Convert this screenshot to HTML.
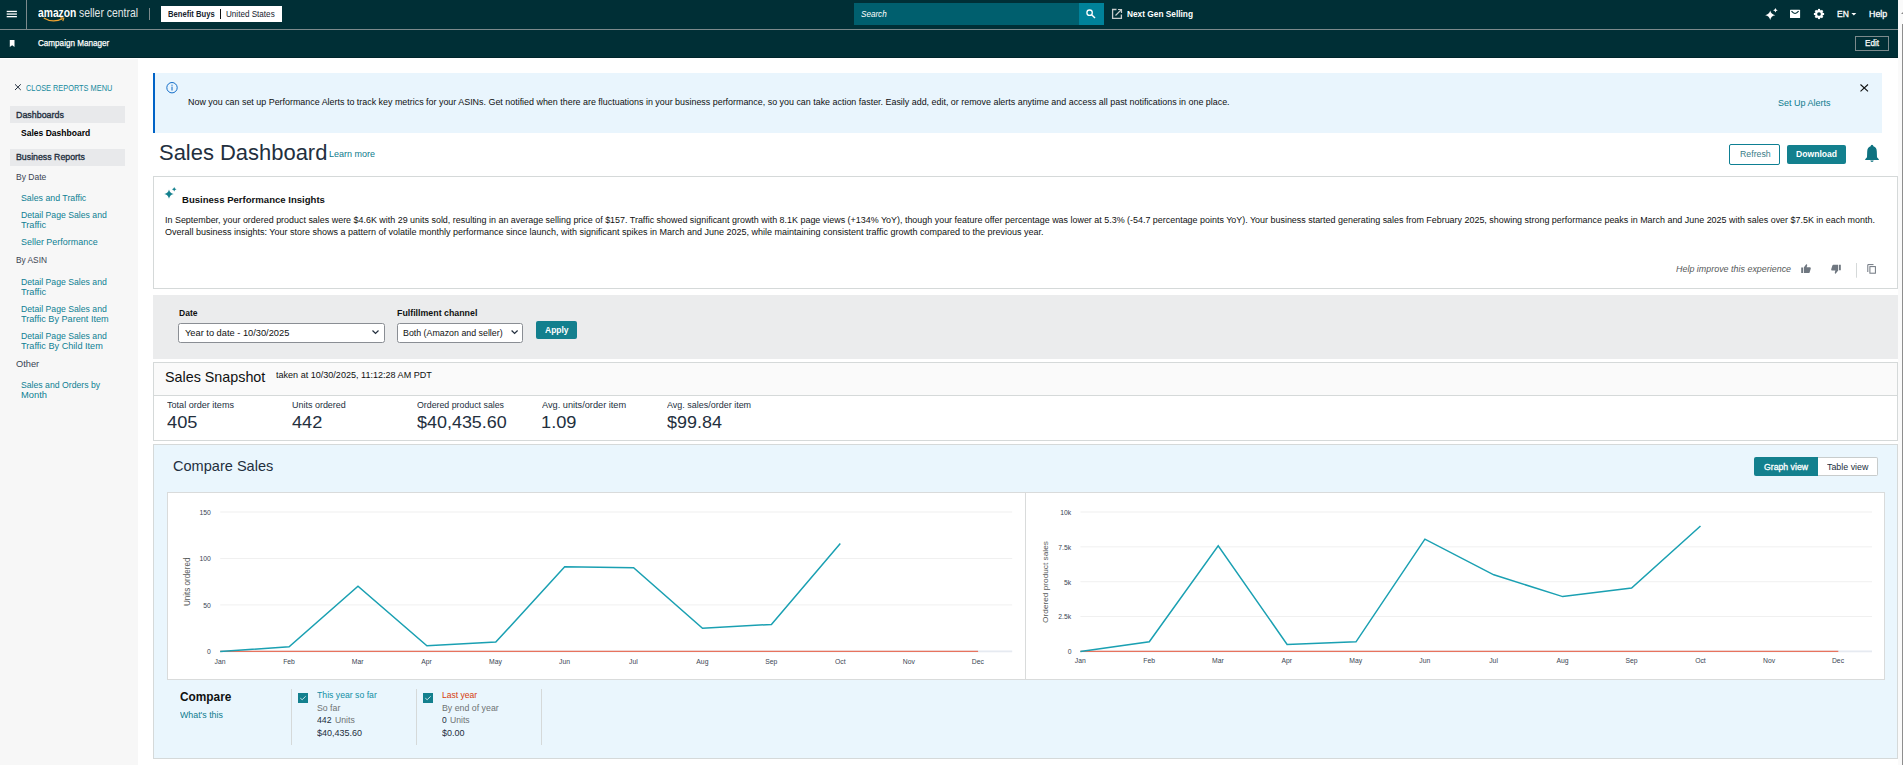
<!DOCTYPE html>
<html><head><meta charset="utf-8">
<style>
*{box-sizing:border-box;margin:0;padding:0}
html,body{width:1903px;height:765px;overflow:hidden;background:#fff;font-family:"Liberation Sans",sans-serif;color:#0f1111}
.t{position:absolute;white-space:nowrap;line-height:1;transform-origin:0 0}
.r{position:absolute}
svg{position:absolute;overflow:visible}
</style></head><body>
<div class="r" style="left:0px;top:0px;width:1898px;height:29px;background:#002f36;"></div>
<div class="r" style="left:0px;top:29px;width:1898px;height:1px;background:#7c8a8c;"></div>
<div class="r" style="left:0px;top:30px;width:1898px;height:28px;background:#002f36;"></div>
<div class="r" style="left:0px;top:57px;width:1898px;height:1px;background:#00252b;"></div>
<div class="r" style="left:1898px;top:0px;width:5px;height:765px;background:#fafafa;"></div>
<div class="r" style="left:1901.8px;top:24px;width:1.2000000000000455px;height:741px;background:#8e8e8e;"></div>
<svg style="left:0;top:0" width="1903" height="20" viewBox="0 0 1903 20"><path d="M1901 14 L1903 12 V14Z" fill="#888"></path></svg>
<div class="r" style="left:26px;top:0px;width:1px;height:29px;background:#7c8a8c;"></div>
<div class="t" style="--x: 37.9; --b: 16.9; --w: 38.4; font-size: 13px; color: rgb(255, 255, 255); font-weight: bold; font-style: normal; left: 37.9px; top: 5.9px; transform: scaleX(0.7924);">amazon</div>
<div class="t" style="--x: 79.2; --b: 16.9; --w: 58.3; font-size: 12.8px; color: rgb(227, 232, 232); font-weight: normal; font-style: normal; left: 79.2px; top: 6.9px; transform: scaleX(0.8131);">seller central</div>
<div class="r" style="left:149px;top:8px;width:1px;height:12px;background:#7c8a8c;"></div>
<div class="r" style="left:161px;top:6px;width:121px;height:16px;background:#fff;"></div>
<div class="t" style="--x: 167.8; --b: 17; --w: 46.8; font-size: 8.7px; color: rgb(22, 34, 46); font-weight: bold; font-style: normal; left: 167.8px; top: 10px; transform: scaleX(0.8786);">Benefit Buys</div>
<div class="r" style="left:220px;top:9px;width:1.3000000000000114px;height:10px;background:#0f1111;"></div>
<div class="t" style="--x: 225.9; --b: 17; --w: 49.3; font-size: 8.7px; color: rgb(22, 34, 46); font-weight: normal; font-style: normal; left: 225.9px; top: 10px; transform: scaleX(0.9335);">United States</div>
<div class="r" style="left:854px;top:3px;width:225px;height:22px;background:#005f6e;"></div>
<div class="r" style="left:1079px;top:3px;width:25px;height:22px;background:#00829a;"></div>
<div class="t" style="--x: 860.5; --b: 17; --w: 25.8; font-size: 8.7px; color: rgb(255, 255, 255); font-weight: normal; font-style: italic; left: 860.5px; top: 10px; transform: scaleX(0.9316);">Search</div>
<div class="t" style="--x: 1127.4; --b: 16.8; --w: 65.6; font-size: 8.9px; color: rgb(255, 255, 255); font-weight: bold; font-style: normal; left: 1127.4px; top: 9.8px; transform: scaleX(0.9358);">Next Gen Selling</div>
<div class="t" style="--x: 1836.6; --b: 16.8; --w: 11.3; font-size: 9px; color: rgb(255, 255, 255); font-weight: normal; font-style: normal; -webkit-text-stroke: 0.3px rgb(255, 255, 255); left: 1836.6px; top: 9.8px; transform: scaleX(0.9414);">EN</div>
<div class="t" style="--x: 1868.6; --b: 16.8; --w: 18.2; font-size: 9px; color: rgb(255, 255, 255); font-weight: normal; font-style: normal; -webkit-text-stroke: 0.3px rgb(255, 255, 255); left: 1868.6px; top: 9.8px; transform: scaleX(0.9836);">Help</div>
<div class="t" style="--x: 38.4; --b: 46.1; --w: 71.2; font-size: 9px; color: rgb(255, 255, 255); font-weight: normal; font-style: normal; -webkit-text-stroke: 0.25px rgb(255, 255, 255); left: 38.4px; top: 39.1px; transform: scaleX(0.9007);">Campaign Manager</div>
<div class="r" style="left:1855px;top:36px;width:34px;height:15px;background:none;border:1px solid #7c8a8c;"></div>
<div class="t" style="--x: 1865.2; --b: 45.9; --w: 14.6; font-size: 9px; color: rgb(255, 255, 255); font-weight: normal; font-style: normal; -webkit-text-stroke: 0.25px rgb(255, 255, 255); left: 1865.2px; top: 38.9px; transform: scaleX(0.9121);">Edit</div>
<svg style="left:0;top:0" width="1903" height="60" viewBox="0 0 1903 60"><rect x="6.7" y="10.8" width="10.2" height="1.3" fill="#fff"></rect><rect x="6.7" y="13.4" width="10.2" height="1.3" fill="#fff"></rect><rect x="6.7" y="16" width="10.2" height="1.3" fill="#fff"></rect><path d="M43.8 18 Q53 23.6 62.6 18.6" stroke="#f3a531" stroke-width="1.3" fill="none"></path><path d="M60.4 17.6 L63.8 18.1 L62.8 21.2" stroke="#f3a531" stroke-width="1.1" fill="none"></path><circle cx="1089.6" cy="12.7" r="2.7" stroke="#fff" stroke-width="1.3" fill="none"></circle><path d="M1091.6 14.8 L1095 18" stroke="#fff" stroke-width="1.5"></path><path d="M1116.5 9.5 H1112.6 V18.3 H1121.4 V14.4" stroke="#c8cccc" stroke-width="1.3" fill="none"></path><path d="M1115.5 15.5 L1121 10 M1118 9.5 H1121.5 V13" stroke="#c8cccc" stroke-width="1.2" fill="none"></path><path d="M1770.2 10.5 Q1771 14.4 1775.2 15.2 Q1771 16 1770.2 20 Q1769.4 16 1765.2 15.2 Q1769.4 14.4 1770.2 10.5Z" fill="#fff"></path><path d="M1775.4 8 Q1775.7 10 1777.7 10.3 Q1775.7 10.6 1775.4 12.6 Q1775.1 10.6 1773.1 10.3 Q1775.1 10 1775.4 8Z" fill="#fff"></path><rect x="1790" y="9.8" width="10.1" height="8.2" rx="0.6" fill="#fff"></rect><path d="M1791.5 11.2 Q1795 15.6 1798.6 11.2" stroke="#002f36" stroke-width="1.05" fill="none"></path><g transform="translate(1819 14)" fill="#fff"><circle r="3.9"></circle><rect x="-1.05" y="-5.1" width="2.1" height="3" transform="rotate(0)"></rect><rect x="-1.05" y="-5.1" width="2.1" height="3" transform="rotate(45)"></rect><rect x="-1.05" y="-5.1" width="2.1" height="3" transform="rotate(90)"></rect><rect x="-1.05" y="-5.1" width="2.1" height="3" transform="rotate(135)"></rect><rect x="-1.05" y="-5.1" width="2.1" height="3" transform="rotate(180)"></rect><rect x="-1.05" y="-5.1" width="2.1" height="3" transform="rotate(225)"></rect><rect x="-1.05" y="-5.1" width="2.1" height="3" transform="rotate(270)"></rect><rect x="-1.05" y="-5.1" width="2.1" height="3" transform="rotate(315)"></rect><circle r="1.85" fill="#002f36"></circle></g><path d="M1851.4 13.1 H1856.3 L1853.85 15.5Z" fill="#fff"></path><path d="M9.8 40 H14.5 V47 L12.15 45.2 L9.8 47Z" fill="#fff"></path></svg>
<div class="r" style="left:0px;top:59px;width:138px;height:706px;background:#f7f7f7;"></div>
<svg style="left:0;top:0" width="140" height="100" viewBox="0 0 140 100"><path d="M15 84.3 L20.8 90 M20.8 84.3 L15 90" stroke="#232f3e" stroke-width="1"></path></svg>
<div class="t" style="--x: 26.1; --b: 91; --w: 86.1; font-size: 8.6px; color: rgb(22, 138, 158); font-weight: normal; font-style: normal; left: 26.1px; top: 84px; transform: scaleX(0.8576);">CLOSE REPORTS MENU</div>
<div class="r" style="left:10px;top:106px;width:115px;height:17px;background:#e8e9eb;"></div>
<div class="t" style="--x: 15.9; --b: 118; --w: 48.3; font-size: 9.2px; color: rgb(35, 47, 62); font-weight: normal; font-style: normal; -webkit-text-stroke: 0.35px rgb(35, 47, 62); left: 15.9px; top: 111px; transform: scaleX(0.967);">Dashboards</div>
<div class="t" style="--x: 20.8; --b: 136; --w: 69.3; font-size: 9.6px; color: rgb(0, 0, 0); font-weight: bold; font-style: normal; left: 20.8px; top: 128px; transform: scaleX(0.8886);">Sales Dashboard</div>
<div class="r" style="left:10px;top:149px;width:115px;height:17px;background:#e8e9eb;"></div>
<div class="t" style="--x: 16; --b: 160.1; --w: 69.2; font-size: 9.2px; color: rgb(35, 47, 62); font-weight: normal; font-style: normal; -webkit-text-stroke: 0.35px rgb(35, 47, 62); left: 16px; top: 153.1px; transform: scaleX(0.9557);">Business Reports</div>
<div class="t" style="--x: 16; --b: 179.7; --w: 30.3; font-size: 9px; color: rgb(58, 69, 83); font-weight: normal; font-style: normal; left: 16px; top: 172.7px; transform: scaleX(0.9466);">By Date</div>
<div class="t" style="--x: 21.4; --b: 200.7; --w: 65.9; font-size: 9px; color: rgb(14, 127, 147); font-weight: normal; font-style: normal; left: 21.4px; top: 193.7px; transform: scaleX(0.9758);">Sales and Traffic</div>
<div class="t" style="--x: 21.4; --b: 218; --w: 85.8; font-size: 9px; color: rgb(14, 127, 147); font-weight: normal; font-style: normal; left: 21.4px; top: 211px; transform: scaleX(0.9635);">Detail Page Sales and</div>
<div class="t" style="--x: 21.4; --b: 227.8; --w: 25.6; font-size: 9px; color: rgb(14, 127, 147); font-weight: normal; font-style: normal; left: 21.4px; top: 220.8px; transform: scaleX(1.0238);">Traffic</div>
<div class="t" style="--x: 21.4; --b: 244.6; --w: 76.6; font-size: 9px; color: rgb(14, 127, 147); font-weight: normal; font-style: normal; left: 21.4px; top: 237.6px; transform: scaleX(0.9945);">Seller Performance</div>
<div class="t" style="--x: 16; --b: 262.5; --w: 31; font-size: 9px; color: rgb(58, 69, 83); font-weight: normal; font-style: normal; left: 16px; top: 255.5px; transform: scaleX(0.9251);">By ASIN</div>
<div class="t" style="--x: 21.4; --b: 284.8; --w: 85.8; font-size: 9px; color: rgb(14, 127, 147); font-weight: normal; font-style: normal; left: 21.4px; top: 277.8px; transform: scaleX(0.9635);">Detail Page Sales and</div>
<div class="t" style="--x: 21.4; --b: 295.4; --w: 25.6; font-size: 9px; color: rgb(14, 127, 147); font-weight: normal; font-style: normal; left: 21.4px; top: 288.4px; transform: scaleX(1.0238);">Traffic</div>
<div class="t" style="--x: 21.4; --b: 311.7; --w: 85.8; font-size: 9px; color: rgb(14, 127, 147); font-weight: normal; font-style: normal; left: 21.4px; top: 304.7px; transform: scaleX(0.9635);">Detail Page Sales and</div>
<div class="t" style="--x: 21.4; --b: 321.6; --w: 87.1; font-size: 9px; color: rgb(14, 127, 147); font-weight: normal; font-style: normal; left: 21.4px; top: 314.6px; transform: scaleX(1.0124);">Traffic By Parent Item</div>
<div class="t" style="--x: 21.4; --b: 339.4; --w: 85.8; font-size: 9px; color: rgb(14, 127, 147); font-weight: normal; font-style: normal; left: 21.4px; top: 332.4px; transform: scaleX(0.9635);">Detail Page Sales and</div>
<div class="t" style="--x: 21.4; --b: 348.6; --w: 81.3; font-size: 9px; color: rgb(14, 127, 147); font-weight: normal; font-style: normal; left: 21.4px; top: 341.6px; transform: scaleX(1.0159);">Traffic By Child Item</div>
<div class="t" style="--x: 16; --b: 367.1; --w: 23.2; font-size: 9px; color: rgb(58, 69, 83); font-weight: normal; font-style: normal; left: 16px; top: 360.1px; transform: scaleX(1.0306);">Other</div>
<div class="t" style="--x: 21.4; --b: 387.8; --w: 79.6; font-size: 9px; color: rgb(14, 127, 147); font-weight: normal; font-style: normal; left: 21.4px; top: 380.8px; transform: scaleX(0.9644);">Sales and Orders by</div>
<div class="t" style="--x: 21.4; --b: 398.4; --w: 25.9; font-size: 9px; color: rgb(14, 127, 147); font-weight: normal; font-style: normal; left: 21.4px; top: 391.4px; transform: scaleX(1.0357);">Month</div>
<div class="r" style="left:153px;top:73px;width:1729px;height:60px;background:#e9f5fd;"></div>
<div class="r" style="left:153px;top:73px;width:2px;height:60px;background:#0063c7;"></div>
<svg style="left:0;top:0" width="1903" height="140" viewBox="0 0 1903 140"><circle cx="172" cy="87.7" r="5.2" stroke="#0a67c6" stroke-width="0.95" fill="none"></circle><rect x="171.5" y="86.6" width="1" height="3.9" fill="#0a67c6"></rect><rect x="171.5" y="84.7" width="1" height="1.1" fill="#0a67c6"></rect><path d="M1860.5 84.5 L1868 91.3 M1868 84.5 L1860.5 91.3" stroke="#0f1111" stroke-width="1.1"></path></svg>
<div class="t" style="--x: 187.9; --b: 105; --w: 1042.1; font-size: 8.7px; color: rgb(15, 17, 17); font-weight: normal; font-style: normal; left: 187.9px; top: 98px; transform: scaleX(1.0252);">Now you can set up Performance Alerts to track key metrics for your ASINs. Get notified when there are fluctuations in your business performance, so you can take action faster. Easily add, edit, or remove alerts anytime and access all past notifications in one place.</div>
<div class="t" style="--x: 1777.5; --b: 106.3; --w: 53.4; font-size: 9px; color: rgb(14, 123, 141); font-weight: normal; font-style: normal; left: 1777.5px; top: 99.3px; transform: scaleX(0.9978);">Set Up Alerts</div>
<div class="t" style="--x: 160; --b: 160; --w: 166; font-size: 22.3px; color: rgb(35, 47, 62); font-weight: normal; font-style: normal; left: 159.02px; top: 142px; transform: scaleX(0.9843);">Sales Dashboard</div>
<div class="t" style="--x: 329.2; --b: 157.1; --w: 45.6; font-size: 9.6px; color: rgb(14, 123, 141); font-weight: normal; font-style: normal; left: 329.2px; top: 149.1px; transform: scaleX(0.9359);">Learn more</div>
<div class="r" style="left:1729px;top:144px;width:51px;height:21px;background:#fff;border:1px solid #0e7f93;border-radius:2px;"></div>
<div class="t" style="--x: 1739.6; --b: 157.2; --w: 30.6; font-size: 9.2px; color: rgb(58, 124, 136); font-weight: normal; font-style: normal; left: 1739.6px; top: 150.2px; transform: scaleX(0.9545);">Refresh</div>
<div class="r" style="left:1787px;top:145px;width:59px;height:19px;background:#13808e;border-radius:2px;"></div>
<div class="t" style="--x: 1796; --b: 157.2; --w: 40.5; font-size: 9.2px; color: rgb(255, 255, 255); font-weight: bold; font-style: normal; left: 1796px; top: 150.2px; transform: scaleX(0.9358);">Download</div>
<svg style="left:0;top:0" width="1903" height="200" viewBox="0 0 1903 200"><path fill="#0e7280" d="M1872 144.7 Q1870.7 144.7 1870.6 146.2 Q1867.3 147.2 1867.2 151.5 L1867 157.3 L1865.2 159.2 V160 H1878.8 V159.2 L1877 157.3 L1876.8 151.5 Q1876.7 147.2 1873.4 146.2 Q1873.3 144.7 1872 144.7Z M1870.3 160.6 Q1870.5 162 1872 162 Q1873.5 162 1873.7 160.6Z"></path></svg>
<div class="r" style="left:153px;top:176px;width:1745px;height:113px;background:#fff;border:1px solid #d5d9d9;"></div>
<svg style="left:0;top:0" width="1903" height="300" viewBox="0 0 1903 300"><path d="M169 189.4 Q169.8 193.2 173.8 194 Q169.8 194.8 169 198.8 Q168.2 194.8 164.2 194 Q168.2 193.2 169 189.4Z" fill="#13808e"></path><path d="M174.2 187 Q174.5 188.9 176.5 189.3 Q174.5 189.7 174.2 191.6 Q173.9 189.7 171.9 189.3 Q173.9 188.9 174.2 187Z" fill="#13808e"></path><path fill="#6f7780" d="M1801.2 267.5 H1803 V273 H1801.2Z M1803.8 267.4 L1806.2 264.2 Q1807.3 264 1807.2 265.4 L1806.6 267.2 H1810 Q1811 267.4 1810.8 268.5 L1809.6 272.4 Q1809.3 273 1808.6 273 H1803.8Z"></path><path fill="#6f7780" d="M1839 264.8 H1840.8 V270.3 H1839Z M1838.2 270.4 L1835.8 273.6 Q1834.7 273.8 1834.8 272.4 L1835.4 270.6 H1832 Q1831 270.4 1831.2 269.3 L1832.4 265.4 Q1832.7 264.8 1833.4 264.8 H1838.2Z"></path><rect x="1856" y="263" width="1" height="14.7" fill="#d5d9d9"></rect><path d="M1867.8 272 V264.6 H1873.5" stroke="#6f7780" stroke-width="1" fill="none"></path><rect x="1869.9" y="266.6" width="5.5" height="6.6" stroke="#6f7780" stroke-width="1" fill="none"></rect></svg>
<div class="t" style="--x: 182.3; --b: 202.6; --w: 142.7; font-size: 9.4px; color: rgb(15, 17, 17); font-weight: bold; font-style: normal; left: 182.3px; top: 194.6px; transform: scaleX(1.0198);">Business Performance Insights</div>
<div class="t" style="--x: 164.9; --b: 222.7; --w: 1710.2; font-size: 8.3px; color: rgb(15, 17, 17); font-weight: normal; font-style: normal; left: 164.9px; top: 215.7px; transform: scaleX(1.0759);">In September, your ordered product sales were $4.6K with 29 units sold, resulting in an average selling price of $157. Traffic showed significant growth with 8.1K page views (+134% YoY), though your feature offer percentage was lower at 5.3% (-54.7 percentage points YoY). Your business started generating sales from February 2025, showing strong performance peaks in March and June 2025 with sales over $7.5K in each month.</div>
<div class="t" style="--x: 164.9; --b: 234.6; --w: 878.3; font-size: 8.3px; color: rgb(15, 17, 17); font-weight: normal; font-style: normal; left: 164.9px; top: 227.6px; transform: scaleX(1.0843);">Overall business insights: Your store shows a pattern of volatile monthly performance since launch, with significant spikes in March and June 2025, while maintaining consistent traffic growth compared to the previous year.</div>
<div class="t" style="--x: 1676.4; --b: 272; --w: 115.3; font-size: 8.6px; color: rgb(86, 89, 89); font-weight: normal; font-style: italic; left: 1676.4px; top: 265px; transform: scaleX(1.0384);">Help improve this experience</div>
<div class="r" style="left:153px;top:295px;width:1745px;height:64px;background:#ebeced;"></div>
<div class="t" style="--x: 178.7; --b: 316; --w: 18.9; font-size: 8.3px; color: rgb(15, 17, 17); font-weight: bold; font-style: normal; left: 178.7px; top: 309px; transform: scaleX(1.0289);">Date</div>
<div class="r" style="left:178px;top:323px;width:207px;height:20px;background:#fff;border:1px solid #8a8e94;border-radius:2.5px;"></div>
<div class="t" style="--x: 184.7; --b: 336; --w: 104.3; font-size: 9px; color: rgb(15, 17, 17); font-weight: normal; font-style: normal; left: 184.7px; top: 329px; transform: scaleX(1.0302);">Year to date - 10/30/2025</div>
<div class="t" style="--x: 397.4; --b: 316; --w: 80; font-size: 8.3px; color: rgb(15, 17, 17); font-weight: bold; font-style: normal; left: 397.4px; top: 309px; transform: scaleX(1.0625);">Fulfillment channel</div>
<div class="r" style="left:397px;top:323px;width:126px;height:20px;background:#fff;border:1px solid #8a8e94;border-radius:2.5px;"></div>
<div class="t" style="--x: 403.1; --b: 335.5; --w: 99.6; font-size: 9px; color: rgb(15, 17, 17); font-weight: normal; font-style: normal; left: 403.1px; top: 328.5px; transform: scaleX(0.9808);">Both (Amazon and seller)</div>
<svg style="left:0;top:0" width="600" height="360" viewBox="0 0 600 360"><path d="M372.5 330.5 L375.5 333.4 L378.5 330.5" stroke="#232f3e" stroke-width="1.25" fill="none"></path><path d="M511.6 330.5 L514.6 333.4 L517.6 330.5" stroke="#232f3e" stroke-width="1.25" fill="none"></path></svg>
<div class="r" style="left:536px;top:321px;width:41px;height:18px;background:#13808e;border-radius:2px;"></div>
<div class="t" style="--x: 545; --b: 332.8; --w: 23.7; font-size: 8.8px; color: rgb(255, 255, 255); font-weight: bold; font-style: normal; left: 545px; top: 325.8px; transform: scaleX(0.9656);">Apply</div>
<div class="r" style="left:153px;top:362px;width:1745px;height:79px;background:#fff;border:1px solid #d5d9d9;"></div>
<div class="r" style="left:154px;top:363px;width:1743px;height:32px;background:#fafafa;"></div>
<div class="r" style="left:154px;top:395px;width:1743px;height:1px;background:#d5d9d9;"></div>
<div class="t" style="--x: 164.5; --b: 382.2; --w: 101.1; font-size: 15px; color: rgb(15, 17, 17); font-weight: normal; font-style: normal; left: 164.5px; top: 369.2px; transform: scaleX(0.9546);">Sales Snapshot</div>
<div class="t" style="--x: 275.6; --b: 378.3; --w: 156.8; font-size: 9px; color: rgb(15, 17, 17); font-weight: normal; font-style: normal; left: 275.6px; top: 371.3px; transform: scaleX(1.0055);">taken at 10/30/2025, 11:12:28 AM PDT</div>
<div class="t" style="--x: 167.1; --b: 408; --w: 67.5; font-size: 9px; color: rgb(35, 47, 62); font-weight: normal; font-style: normal; left: 167.1px; top: 401px; transform: scaleX(1.0071);">Total order items</div>
<div class="t" style="--x: 167.1; --b: 427.7; --w: 30.2; font-size: 16.5px; color: rgb(35, 47, 62); font-weight: normal; font-style: normal; left: 167.1px; top: 413.7px; transform: scaleX(1.1041);">405</div>
<div class="t" style="--x: 291.9; --b: 408; --w: 53.8; font-size: 9px; color: rgb(35, 47, 62); font-weight: normal; font-style: normal; left: 291.9px; top: 401px; transform: scaleX(0.9959);">Units ordered</div>
<div class="t" style="--x: 291.9; --b: 427.7; --w: 30.1; font-size: 16.5px; color: rgb(35, 47, 62); font-weight: normal; font-style: normal; left: 291.9px; top: 413.7px; transform: scaleX(1.1004);">442</div>
<div class="t" style="--x: 417.2; --b: 408; --w: 87.5; font-size: 9px; color: rgb(35, 47, 62); font-weight: normal; font-style: normal; left: 417.2px; top: 401px; transform: scaleX(0.9771);">Ordered product sales</div>
<div class="t" style="--x: 417.2; --b: 427.7; --w: 89.6; font-size: 16.5px; color: rgb(35, 47, 62); font-weight: normal; font-style: normal; left: 417.2px; top: 413.7px; transform: scaleX(1.0873);">$40,435.60</div>
<div class="t" style="--x: 542; --b: 408; --w: 83.6; font-size: 9px; color: rgb(35, 47, 62); font-weight: normal; font-style: normal; left: 542px; top: 401px; transform: scaleX(1.0211);">Avg. units/order item</div>
<div class="t" style="--x: 542; --b: 427.7; --w: 34.2; font-size: 16.5px; color: rgb(35, 47, 62); font-weight: normal; font-style: normal; left: 540.89px; top: 413.7px; transform: scaleX(1.1055);">1.09</div>
<div class="t" style="--x: 667; --b: 408; --w: 83.6; font-size: 9px; color: rgb(35, 47, 62); font-weight: normal; font-style: normal; left: 667px; top: 401px; transform: scaleX(0.9967);">Avg. sales/order item</div>
<div class="t" style="--x: 667; --b: 427.7; --w: 54.7; font-size: 16.5px; color: rgb(35, 47, 62); font-weight: normal; font-style: normal; left: 667px; top: 413.7px; transform: scaleX(1.0877);">$99.84</div>
<div class="r" style="left:153px;top:444px;width:1745px;height:315px;background:#eaf6fd;border:1px solid #d5d9d9;"></div>
<div class="t" style="--x: 173.2; --b: 471.2; --w: 99.8; font-size: 15px; color: rgb(35, 47, 62); font-weight: normal; font-style: normal; left: 173.2px; top: 458.2px; transform: scaleX(0.97);">Compare Sales</div>
<div class="r" style="left:1754px;top:457px;width:64px;height:19px;background:#13808e;border-radius:2px 0 0 2px;"></div>
<div class="r" style="left:1818px;top:457px;width:60px;height:19px;background:#fff;border:1px solid #c8cccc;border-left:none;border-radius:0 2px 2px 0;"></div>
<div class="t" style="--x: 1763.8; --b: 470; --w: 44.5; font-size: 9px; color: rgb(255, 255, 255); font-weight: normal; font-style: normal; -webkit-text-stroke: 0.3px rgb(255, 255, 255); left: 1763.8px; top: 463px; transform: scaleX(0.967);">Graph view</div>
<div class="t" style="--x: 1827.2; --b: 470; --w: 41.9; font-size: 9px; color: rgb(35, 47, 62); font-weight: normal; font-style: normal; left: 1827.2px; top: 463px; transform: scaleX(0.9854);">Table view</div>
<div class="r" style="left:167px;top:492px;width:1718px;height:188px;background:#fff;border:1px solid #d9dbdb;"></div>
<div class="r" style="left:1025px;top:493px;width:1px;height:186px;background:#d9dbdb;"></div>
<svg style="left:0;top:0" width="1903" height="765" viewBox="0 0 1903 765"><rect x="220.2" y="650.50" width="792.0" height="1.8" fill="#e6eaf1"></rect><rect x="220.2" y="604.43" width="792.0" height="1" fill="#f0f0f0"></rect><rect x="220.2" y="557.97" width="792.0" height="1" fill="#f0f0f0"></rect><rect x="220.2" y="511.50" width="792.0" height="1" fill="#f0f0f0"></rect><rect x="1080.4" y="650.50" width="791.6" height="1.8" fill="#e6eaf1"></rect><rect x="1080.4" y="616.05" width="791.6" height="1" fill="#f0f0f0"></rect><rect x="1080.4" y="581.20" width="791.6" height="1" fill="#f0f0f0"></rect><rect x="1080.4" y="546.35" width="791.6" height="1" fill="#f0f0f0"></rect><rect x="1080.4" y="511.50" width="791.6" height="1" fill="#f0f0f0"></rect><path d="M220.2 651.4 H978.1" stroke="#e8735e" stroke-width="1.3"></path><path d="M1080.4 651.4 H1838.3" stroke="#e8735e" stroke-width="1.3"></path><polyline points="220.2,651.4 289.1,646.8 358.0,586.3 426.9,645.8 495.8,642.1 564.7,566.8 633.6,567.8 702.5,628.2 771.4,624.4 840.3,543.6" stroke="#1aa0b2" stroke-width="1.5" fill="none" stroke-linejoin="miter"></polyline><polyline points="1080.4,651.4 1149.3,641.8 1218.2,545.8 1287.1,644.4 1356.0,641.8 1424.9,539.2 1493.8,574.8 1562.7,596.6 1631.6,588.1 1700.5,526.0" stroke="#1aa0b2" stroke-width="1.5" fill="none" stroke-linejoin="miter"></polyline><text x="0" y="0" transform="translate(190.2 581.8) rotate(-90)" text-anchor="middle" font-size="8.6" fill="#565959" textLength="48.4" lengthAdjust="spacingAndGlyphs" font-family="Liberation Sans">Units ordered</text><text x="0" y="0" transform="translate(1048.2 582) rotate(-90)" text-anchor="middle" font-size="7.2" fill="#565959" textLength="81.8" lengthAdjust="spacingAndGlyphs" font-family="Liberation Sans">Ordered product sales</text></svg>
<div class="t" style="--r: 211; --b: 514.8; font-size: 6.8px; color: rgb(58, 69, 83); font-weight: normal; font-style: normal; left: 199.44px; top: 509.8px; transform: none;">150</div>
<div class="t" style="--r: 211; --b: 561.2666666666667; font-size: 6.8px; color: rgb(58, 69, 83); font-weight: normal; font-style: normal; left: 199.44px; top: 556.27px; transform: none;">100</div>
<div class="t" style="--r: 211; --b: 607.7333333333332; font-size: 6.8px; color: rgb(58, 69, 83); font-weight: normal; font-style: normal; left: 203.22px; top: 602.73px; transform: none;">50</div>
<div class="t" style="--r: 211; --b: 654.1999999999999; font-size: 6.8px; color: rgb(58, 69, 83); font-weight: normal; font-style: normal; left: 207px; top: 649.2px; transform: none;">0</div>
<div class="t" style="--r: 1071.8; --b: 514.8; font-size: 6.8px; color: rgb(58, 69, 83); font-weight: normal; font-style: normal; left: 1060.24px; top: 509.8px; transform: none;">10k</div>
<div class="t" style="--r: 1071.8; --b: 549.65; font-size: 6.8px; color: rgb(58, 69, 83); font-weight: normal; font-style: normal; left: 1058.35px; top: 544.65px; transform: none;">7.5k</div>
<div class="t" style="--r: 1071.8; --b: 584.5; font-size: 6.8px; color: rgb(58, 69, 83); font-weight: normal; font-style: normal; left: 1064.02px; top: 579.5px; transform: none;">5k</div>
<div class="t" style="--r: 1071.8; --b: 619.3499999999999; font-size: 6.8px; color: rgb(58, 69, 83); font-weight: normal; font-style: normal; left: 1058.35px; top: 614.35px; transform: none;">2.5k</div>
<div class="t" style="--r: 1071.8; --b: 654.1999999999999; font-size: 6.8px; color: rgb(58, 69, 83); font-weight: normal; font-style: normal; left: 1067.8px; top: 649.2px; transform: none;">0</div>
<div class="t" style="--c: 220.2; --b: 663.9; font-size: 6.8px; color: rgb(58, 69, 83); font-weight: normal; font-style: normal; left: 214.61px; top: 658.9px; transform: none;">Jan</div>
<div class="t" style="--c: 1080.4; --b: 662.8; font-size: 6.8px; color: rgb(58, 69, 83); font-weight: normal; font-style: normal; left: 1074.81px; top: 657.8px; transform: none;">Jan</div>
<div class="t" style="--c: 289.1; --b: 663.9; font-size: 6.8px; color: rgb(58, 69, 83); font-weight: normal; font-style: normal; left: 283.13px; top: 658.9px; transform: none;">Feb</div>
<div class="t" style="--c: 1149.3000000000002; --b: 662.8; font-size: 6.8px; color: rgb(58, 69, 83); font-weight: normal; font-style: normal; left: 1143.33px; top: 657.8px; transform: none;">Feb</div>
<div class="t" style="--c: 358.0; --b: 663.9; font-size: 6.8px; color: rgb(58, 69, 83); font-weight: normal; font-style: normal; left: 351.78px; top: 658.9px; transform: none;">Mar</div>
<div class="t" style="--c: 1218.2; --b: 662.8; font-size: 6.8px; color: rgb(58, 69, 83); font-weight: normal; font-style: normal; left: 1211.98px; top: 657.8px; transform: none;">Mar</div>
<div class="t" style="--c: 426.9; --b: 663.9; font-size: 6.8px; color: rgb(58, 69, 83); font-weight: normal; font-style: normal; left: 421.24px; top: 658.9px; transform: none;">Apr</div>
<div class="t" style="--c: 1287.1000000000001; --b: 662.8; font-size: 6.8px; color: rgb(58, 69, 83); font-weight: normal; font-style: normal; left: 1281.44px; top: 657.8px; transform: none;">Apr</div>
<div class="t" style="--c: 495.8; --b: 663.9; font-size: 6.8px; color: rgb(58, 69, 83); font-weight: normal; font-style: normal; left: 489.08px; top: 658.9px; transform: none;">May</div>
<div class="t" style="--c: 1356.0; --b: 662.8; font-size: 6.8px; color: rgb(58, 69, 83); font-weight: normal; font-style: normal; left: 1349.28px; top: 657.8px; transform: none;">May</div>
<div class="t" style="--c: 564.7; --b: 663.9; font-size: 6.8px; color: rgb(58, 69, 83); font-weight: normal; font-style: normal; left: 559.11px; top: 658.9px; transform: none;">Jun</div>
<div class="t" style="--c: 1424.9; --b: 662.8; font-size: 6.8px; color: rgb(58, 69, 83); font-weight: normal; font-style: normal; left: 1419.31px; top: 657.8px; transform: none;">Jun</div>
<div class="t" style="--c: 633.6; --b: 663.9; font-size: 6.8px; color: rgb(58, 69, 83); font-weight: normal; font-style: normal; left: 629.01px; top: 658.9px; transform: none;">Jul</div>
<div class="t" style="--c: 1493.8000000000002; --b: 662.8; font-size: 6.8px; color: rgb(58, 69, 83); font-weight: normal; font-style: normal; left: 1489.21px; top: 657.8px; transform: none;">Jul</div>
<div class="t" style="--c: 702.5; --b: 663.9; font-size: 6.8px; color: rgb(58, 69, 83); font-weight: normal; font-style: normal; left: 696.34px; top: 658.9px; transform: none;">Aug</div>
<div class="t" style="--c: 1562.7000000000003; --b: 662.8; font-size: 6.8px; color: rgb(58, 69, 83); font-weight: normal; font-style: normal; left: 1556.54px; top: 657.8px; transform: none;">Aug</div>
<div class="t" style="--c: 771.4000000000001; --b: 663.9; font-size: 6.8px; color: rgb(58, 69, 83); font-weight: normal; font-style: normal; left: 765.24px; top: 658.9px; transform: none;">Sep</div>
<div class="t" style="--c: 1631.6000000000001; --b: 662.8; font-size: 6.8px; color: rgb(58, 69, 83); font-weight: normal; font-style: normal; left: 1625.44px; top: 657.8px; transform: none;">Sep</div>
<div class="t" style="--c: 840.3; --b: 663.9; font-size: 6.8px; color: rgb(58, 69, 83); font-weight: normal; font-style: normal; left: 834.96px; top: 658.9px; transform: none;">Oct</div>
<div class="t" style="--c: 1700.5; --b: 662.8; font-size: 6.8px; color: rgb(58, 69, 83); font-weight: normal; font-style: normal; left: 1695.16px; top: 657.8px; transform: none;">Oct</div>
<div class="t" style="--c: 909.2; --b: 663.9; font-size: 6.8px; color: rgb(58, 69, 83); font-weight: normal; font-style: normal; left: 902.86px; top: 658.9px; transform: none;">Nov</div>
<div class="t" style="--c: 1769.4; --b: 662.8; font-size: 6.8px; color: rgb(58, 69, 83); font-weight: normal; font-style: normal; left: 1763.06px; top: 657.8px; transform: none;">Nov</div>
<div class="t" style="--c: 978.1000000000001; --b: 663.9; font-size: 6.8px; color: rgb(58, 69, 83); font-weight: normal; font-style: normal; left: 971.76px; top: 658.9px; transform: none;">Dec</div>
<div class="t" style="--c: 1838.3000000000002; --b: 662.8; font-size: 6.8px; color: rgb(58, 69, 83); font-weight: normal; font-style: normal; left: 1831.96px; top: 657.8px; transform: none;">Dec</div>
<div class="t" style="--x: 180; --b: 700.8; --w: 51.7; font-size: 12px; color: rgb(15, 17, 17); font-weight: bold; font-style: normal; left: 180px; top: 690.8px; transform: scaleX(0.9878);">Compare</div>
<div class="t" style="--x: 179.8; --b: 717.8; --w: 43.5; font-size: 8.8px; color: rgb(14, 123, 141); font-weight: normal; font-style: normal; left: 179.8px; top: 710.8px; transform: scaleX(1.0036);">What's this</div>
<div class="r" style="left:291px;top:689px;width:1px;height:56px;background:#d5d9d9;"></div>
<div class="r" style="left:416px;top:689px;width:1px;height:56px;background:#d5d9d9;"></div>
<div class="r" style="left:541px;top:689px;width:1px;height:56px;background:#d5d9d9;"></div>
<div class="r" style="left:298px;top:693px;width:10px;height:10px;background:#13808e;"></div>
<div class="r" style="left:423px;top:693px;width:10px;height:10px;background:#13808e;"></div>
<svg style="left:0;top:0" width="600" height="765" viewBox="0 0 600 765"><path d="M300.3 698.2 L302.2 699.7 L305.7 696.3" stroke="#d7eef2" stroke-width="0.9" fill="none"></path><path d="M425.3 698.2 L427.2 699.7 L430.7 696.3" stroke="#d7eef2" stroke-width="0.9" fill="none"></path></svg>
<div class="t" style="--x: 317; --b: 698.3; --w: 59.8; font-size: 9px; color: rgb(18, 143, 165); font-weight: normal; font-style: normal; left: 317px; top: 691.3px; transform: scaleX(0.9642);">This year so far</div>
<div class="t" style="--x: 317; --b: 711; --w: 23.3; font-size: 9px; color: rgb(111, 115, 115); font-weight: normal; font-style: normal; left: 317px; top: 704px; transform: scaleX(0.9702);">So far</div>
<div class="t" style="--x: 317; --b: 722.8; --w: 14.6; font-size: 9px; color: rgb(35, 47, 62); font-weight: normal; font-style: normal; left: 317px; top: 715.8px; transform: scaleX(0.9726);">442</div>
<div class="t" style="--x: 334.7; --b: 722.8; --w: 20.2; font-size: 9px; color: rgb(111, 115, 115); font-weight: normal; font-style: normal; left: 334.7px; top: 715.8px; transform: scaleX(0.9617);">Units</div>
<div class="t" style="--x: 317; --b: 735.8; --w: 45; font-size: 9px; color: rgb(35, 47, 62); font-weight: normal; font-style: normal; left: 317px; top: 728.8px; transform: scaleX(0.9991);">$40,435.60</div>
<div class="t" style="--x: 441.7; --b: 698.3; --w: 35.2; font-size: 9px; color: rgb(214, 60, 12); font-weight: normal; font-style: normal; left: 441.7px; top: 691.3px; transform: scaleX(0.9508);">Last year</div>
<div class="t" style="--x: 441.7; --b: 711; --w: 56.7; font-size: 9px; color: rgb(111, 115, 115); font-weight: normal; font-style: normal; left: 441.7px; top: 704px; transform: scaleX(0.977);">By end of year</div>
<div class="t" style="--x: 441.7; --b: 722.8; --w: 4.7; font-size: 9px; color: rgb(35, 47, 62); font-weight: normal; font-style: normal; left: 441.7px; top: 715.8px; transform: scaleX(0.94);">0</div>
<div class="t" style="--x: 449.6; --b: 722.8; --w: 20.1; font-size: 9px; color: rgb(111, 115, 115); font-weight: normal; font-style: normal; left: 449.6px; top: 715.8px; transform: scaleX(0.9569);">Units</div>
<div class="t" style="--x: 441.7; --b: 735.8; --w: 22.5; font-size: 9px; color: rgb(35, 47, 62); font-weight: normal; font-style: normal; left: 441.7px; top: 728.8px; transform: scaleX(0.9993);">$0.00</div>
</body></html>
